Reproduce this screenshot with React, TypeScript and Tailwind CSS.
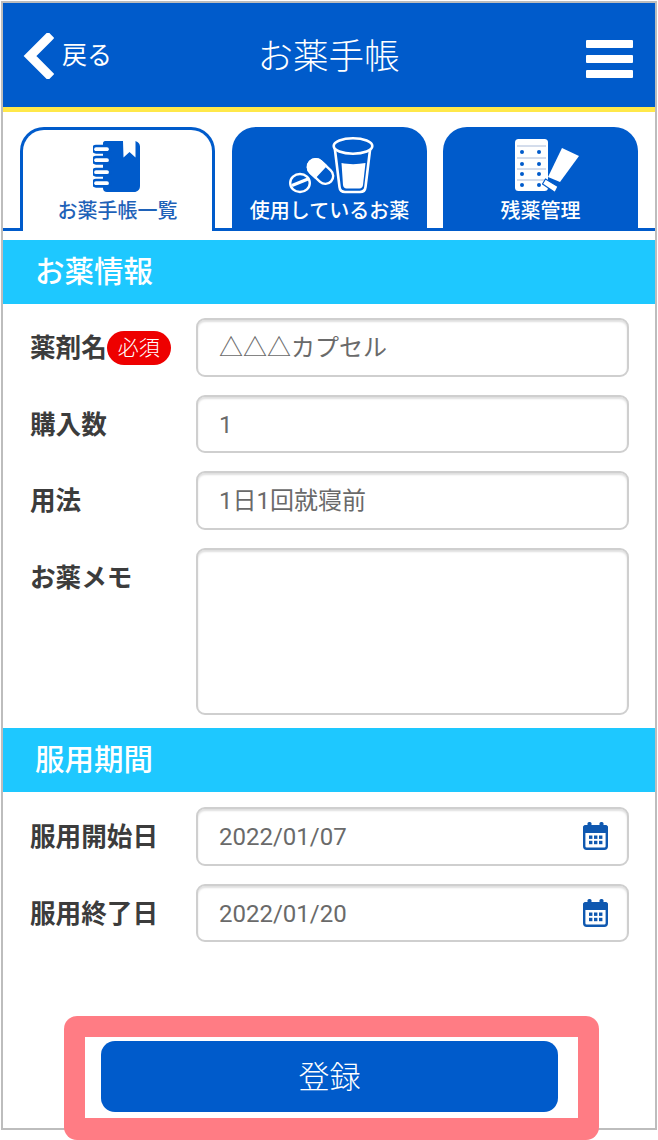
import React from "react";

const font = { fontFamily: 'Roboto, "Noto Sans CJK JP", "Noto Sans", sans-serif' };

function NotebookIcon() {
  const coils = [5, 16, 28, 39];
  return (
    <svg width="47" height="51" viewBox="0 0 47 51" className="block">
      <path d="M12 0h29c3.500 0 6 2.500 6 6v39c0 3.500-2.500 6-6 6H14c-2.500 0-4-1.500-4-4V2c0-1 1-2 2-2z" fill="#005bcb" />
      <path d="M30 0h12.500v16.500l-6-5.500-6 5.500z" fill="#fff" />
      {coils.map((y) => (
        <path
          key={y}
          d={`M3 ${y}h11a3.200 3.200 0 0 1 0 6.400H3a3.200 3.200 0 0 1 0-6.400z`}
          fill="#fff"
          stroke="#005bcb"
          strokeWidth="2.600"
        />
      ))}
    </svg>
  );
}

function MedicineIcon() {
  return (
    <svg width="86" height="57" viewBox="0 0 86 57" className="block">
      <g transform="translate(31.500 34.500) rotate(43)">
        <rect x="-14.500" y="-7.800" width="29" height="15.600" rx="7.800" fill="#005bcb" stroke="#fff" strokeWidth="2.400" />
        <path d="M1 -9H-6.500a9 9 0 0 0 0 18H1z" fill="#fff" />
      </g>
      <ellipse cx="11" cy="46" rx="9.800" ry="9" fill="#005bcb" stroke="#fff" strokeWidth="2.400" />
      <path d="M3 48.500L19 42" stroke="#fff" strokeWidth="3" />
      <path d="M45.500 9l5 41c.3 3 2.500 5 5.500 5h15c3 0 5.200-2 5.500-5l5-41" fill="#005bcb" stroke="#fff" strokeWidth="2.600" />
      <ellipse cx="64" cy="9" rx="19.300" ry="7.700" fill="#005bcb" stroke="#fff" strokeWidth="2.600" />
      <path d="M52.500 26c7 1.500 16 1.500 24 0l-2.500 22c-.3 2-1.500 3.500-3.500 3.500H57.500c-2 0-3.200-1.500-3.500-3.500z" fill="#fff" />
    </svg>
  );
}

function BlisterIcon() {
  const rows = [13, 25, 35, 46];
  return (
    <svg width="65" height="54" viewBox="0 0 65 54" className="block">
      <rect x="0" y="0" width="33" height="52" rx="3.500" fill="#fff" />
      {[7, 19, 30, 41].map((y) => (
        <path key={y} d={`M2 ${y}H31`} stroke="#a9bad8" strokeWidth="1" />
      ))}
      {rows.map((y) => (
        <g key={y} fill="#005bcb">
          <circle cx="7" cy={y} r="2" />
          <circle cx="24" cy={y} r="2" />
        </g>
      ))}
      <path d="M47 9l17 8-19 26-12-5z" fill="#fff" />
      <path d="M30.500 40l12.500 7.500-3 6-12.500-8.500z" fill="#fff" stroke="#005bcb" strokeWidth="1.200" strokeLinejoin="round" />
    </svg>
  );
}

function CalendarIcon() {
  return (
    <svg width="25" height="28" viewBox="0 0 25 28" className="block">
      <rect x="1.200" y="4.200" width="22.600" height="22.600" rx="2.500" fill="#fff" stroke="#0f58b0" strokeWidth="2.400" />
      <rect x="0" y="3" width="25" height="8" rx="2.500" fill="#0f58b0" />
      <rect x="4.500" y="0" width="4" height="7" rx="1.500" fill="#0f58b0" />
      <rect x="16.500" y="0" width="4" height="7" rx="1.500" fill="#0f58b0" />
      <g fill="#0f58b0">
        {[6, 11, 16].map((x) => (
          <React.Fragment key={x}>
            <rect x={x} y="13.500" width="3.400" height="3.400" />
            <rect x={x} y="18.800" width="3.400" height="3.400" />
          </React.Fragment>
        ))}
      </g>
    </svg>
  );
}

function SectionBar({ children }: { children: React.ReactNode }) {
  return (
    <div className="h-[64px] bg-[#1ec8ff] text-white font-medium text-[29.500px] leading-[65px] pl-[32px]">
      {children}
    </div>
  );
}

function Field({
  label,
  value,
  badge,
  icon,
  tall,
}: {
  label: string;
  value?: string;
  badge?: boolean;
  icon?: boolean;
  tall?: boolean;
}) {
  return (
    <div className="flex items-start pl-[27px] pr-[26px]">
      <div className="w-[166px] h-[58.500px] pt-[2px] flex items-center text-[25.600px] font-bold text-[#3c3c3c] shrink-0">
        <span>{label}</span>
        {badge && (
          <span className="w-[64px] h-[34px] rounded-full bg-[#ee0000] text-white text-[21px] font-light flex items-center justify-center">
            必須
          </span>
        )}
      </div>
      <div
        className={`flex-1 ${tall ? "h-[167px]" : "h-[58.500px]"} bg-white border-2 border-[#cfcfcf] rounded-[9px] shadow-[inset_0_2px_2px_rgba(0,0,0,0.13)] flex items-center justify-between pl-[21px] pr-[19px]`}
      >
        <span className="text-[24px] text-[#6a6a6a] font-normal leading-none mt-[2px]">{value}</span>
        {icon && <CalendarIcon />}
      </div>
    </div>
  );
}

function Tab({
  label,
  icon,
  active,
  iconClass,
  className = "",
}: {
  label: string;
  icon: React.ReactNode;
  active?: boolean;
  iconClass: string;
  className?: string;
}) {
  return (
    <div
      className={`w-[195px] h-[104px] shrink-0 rounded-t-[24px] flex flex-col items-center relative ${className} ${
        active
          ? "bg-white border-x-[3px] border-t-[3px] border-[#005bcb] text-[#1f62b8] z-10"
          : "bg-[#005bcb] text-white"
      }`}
    >
      <div className={iconClass}>{icon}</div>
      <div className="absolute bottom-[6px] left-0 right-0 text-center text-[20px] font-medium leading-[28px]">
        {label}
      </div>
    </div>
  );
}

export default function App() {
  return (
    <div className="w-[658px] h-[1140px] bg-white relative overflow-hidden" style={font}>
      <div className="ml-px mt-px w-[656px] h-[1129px] border-2 border-[#bdbdbd] flex flex-col">
        <header className="h-[104px] bg-[#005bcb] flex items-center justify-between pl-[20px] pr-[22px] text-white relative shrink-0">
          <div className="flex items-center gap-[8px] mt-[2px]">
            <svg width="31" height="46" viewBox="0 0 31 46" className="block">
              <path d="M25 5L7 23l18 18" fill="none" stroke="#fff" strokeWidth="9" strokeLinecap="square" />
            </svg>
            <span className="text-[25px] font-normal -mt-[1px]">戻る</span>
          </div>
          <div className="absolute left-0 right-0 -ml-[1px] pt-[5px] text-center text-[35.500px] font-light leading-none">
            お薬手帳
          </div>
          <div className="flex flex-col gap-[7px] w-[47px] mt-[8px]">
            <div className="h-[8px] bg-white rounded-[1px]" />
            <div className="h-[8px] bg-white rounded-[1px]" />
            <div className="h-[8px] bg-white rounded-[1px]" />
          </div>
        </header>
        <div className="h-[5px] bg-[#ffe84a] shrink-0" />
        <div className="pt-[15px] shrink-0">
          <div className="flex pl-[17px] gap-[17px] border-b-[3px] border-[#005bcb] h-[104px] items-start">
            <Tab label="お薬手帳一覧" icon={<NotebookIcon />} active iconClass="mt-[11px] -ml-[2px]" />
            <Tab label="使用しているお薬" icon={<MedicineIcon />} iconClass="mt-[10px] ml-[5px]" />
            <Tab label="残薬管理" icon={<BlisterIcon />} iconClass="mt-[12px] ml-[13px]" className="-ml-[1px]" />
          </div>
        </div>
        <div className="mt-[9px]">
          <SectionBar>お薬情報</SectionBar>
        </div>
        <div className="flex flex-col gap-[18px] pt-[14px] pb-[13.500px]">
          <Field label="薬剤名" value="△△△カプセル" badge />
          <Field label="購入数" value="1" />
          <Field label="用法" value="1日1回就寝前" />
          <Field label="お薬メモ" tall />
        </div>
        <SectionBar>服用期間</SectionBar>
        <div className="flex flex-col gap-[18px] pt-[15px]">
          <Field label="服用開始日" value="2022/01/07" icon />
          <Field label="服用終了日" value="2022/01/20" icon />
        </div>
      </div>
      <div className="absolute left-[64px] top-[1016px] w-[535px] h-[124px] rounded-[13px] bg-[#ff7c84] p-[21px] pb-[22px]">
        <div className="w-full h-full bg-white pl-[16px] pr-[20px] pt-[4px] pb-[6px]">
          <div className="h-full bg-[#005bcb] rounded-[14px] pt-[3px] flex items-center justify-center text-white text-[31px] font-light">
            登録
          </div>
        </div>
      </div>
    </div>
  );
}
